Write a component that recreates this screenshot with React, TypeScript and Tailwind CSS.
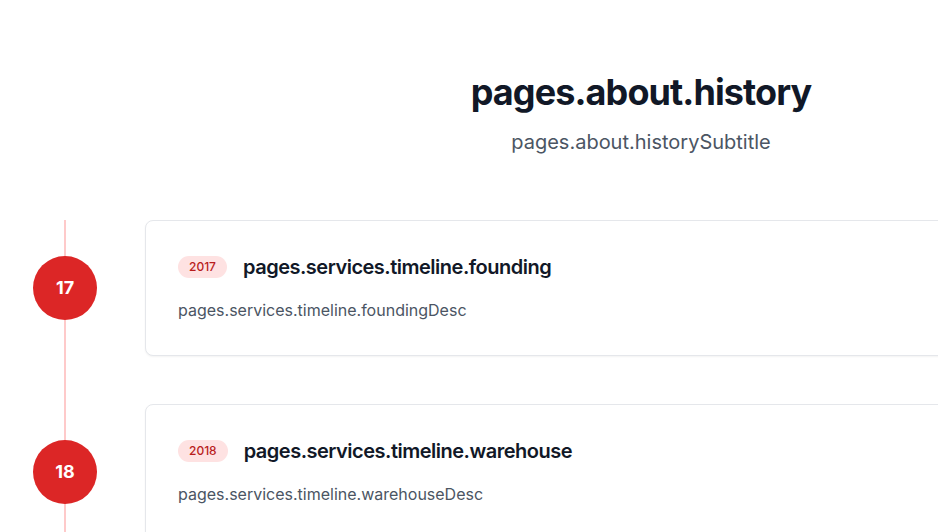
import React from 'react';

const milestones = [
    { day: '17', year: '2017', title: 'pages.services.timeline.founding', desc: 'pages.services.timeline.foundingDesc' },
    { day: '18', year: '2018', title: 'pages.services.timeline.warehouse', desc: 'pages.services.timeline.warehouseDesc' },
    { day: '19', year: '2019', title: 'pages.services.timeline.expansion', desc: 'pages.services.timeline.expansionDesc' },
];

const App = () => {
    return (
        <div className="w-full h-[532px] overflow-hidden bg-white font-['Inter',sans-serif]">
            <div className="w-[1282px] px-[33px] pt-[72px] pb-16">
                {/* Heading */}
                <div className="text-center mb-16">
                    <h2 className="text-4xl font-bold text-[#111827] mb-4 tracking-tight">pages.about.history</h2>
                    <p className="text-xl text-[#4b5563]">pages.about.historySubtitle</p>
                </div>

                {/* Timeline */}
                <div className="relative">
                    <div className="absolute left-[31px] top-0 bottom-0 w-0.5 bg-[#fecaca]" />
                    <div className="flex flex-col gap-12">
                        {milestones.map((m) => (
                            <div key={m.year} className="relative flex items-center gap-12">
                                <div className="w-16 h-16 shrink-0 rounded-full bg-[#dc2626] flex items-center justify-center text-white text-lg font-bold">
                                    {m.day}
                                </div>
                                <div className="flex-1 bg-white border border-[#e5e7eb] rounded-lg shadow-[0_1px_2px_0_rgba(0,0,0,0.05)] p-8">
                                    <div className="flex items-center gap-4 mb-4">
                                        <span className="px-[11px] py-[3px] rounded-full bg-[#fee2e2] text-[#b91c1c] text-xs font-medium">
                                            {m.year}
                                        </span>
                                        <h3 className="text-xl font-semibold tracking-tight text-[#111827]">{m.title}</h3>
                                    </div>
                                    <p className="text-base leading-relaxed text-[#4b5563]">{m.desc}</p>
                                </div>
                            </div>
                        ))}
                    </div>
                </div>
            </div>
        </div>
    );
};

export default App;
